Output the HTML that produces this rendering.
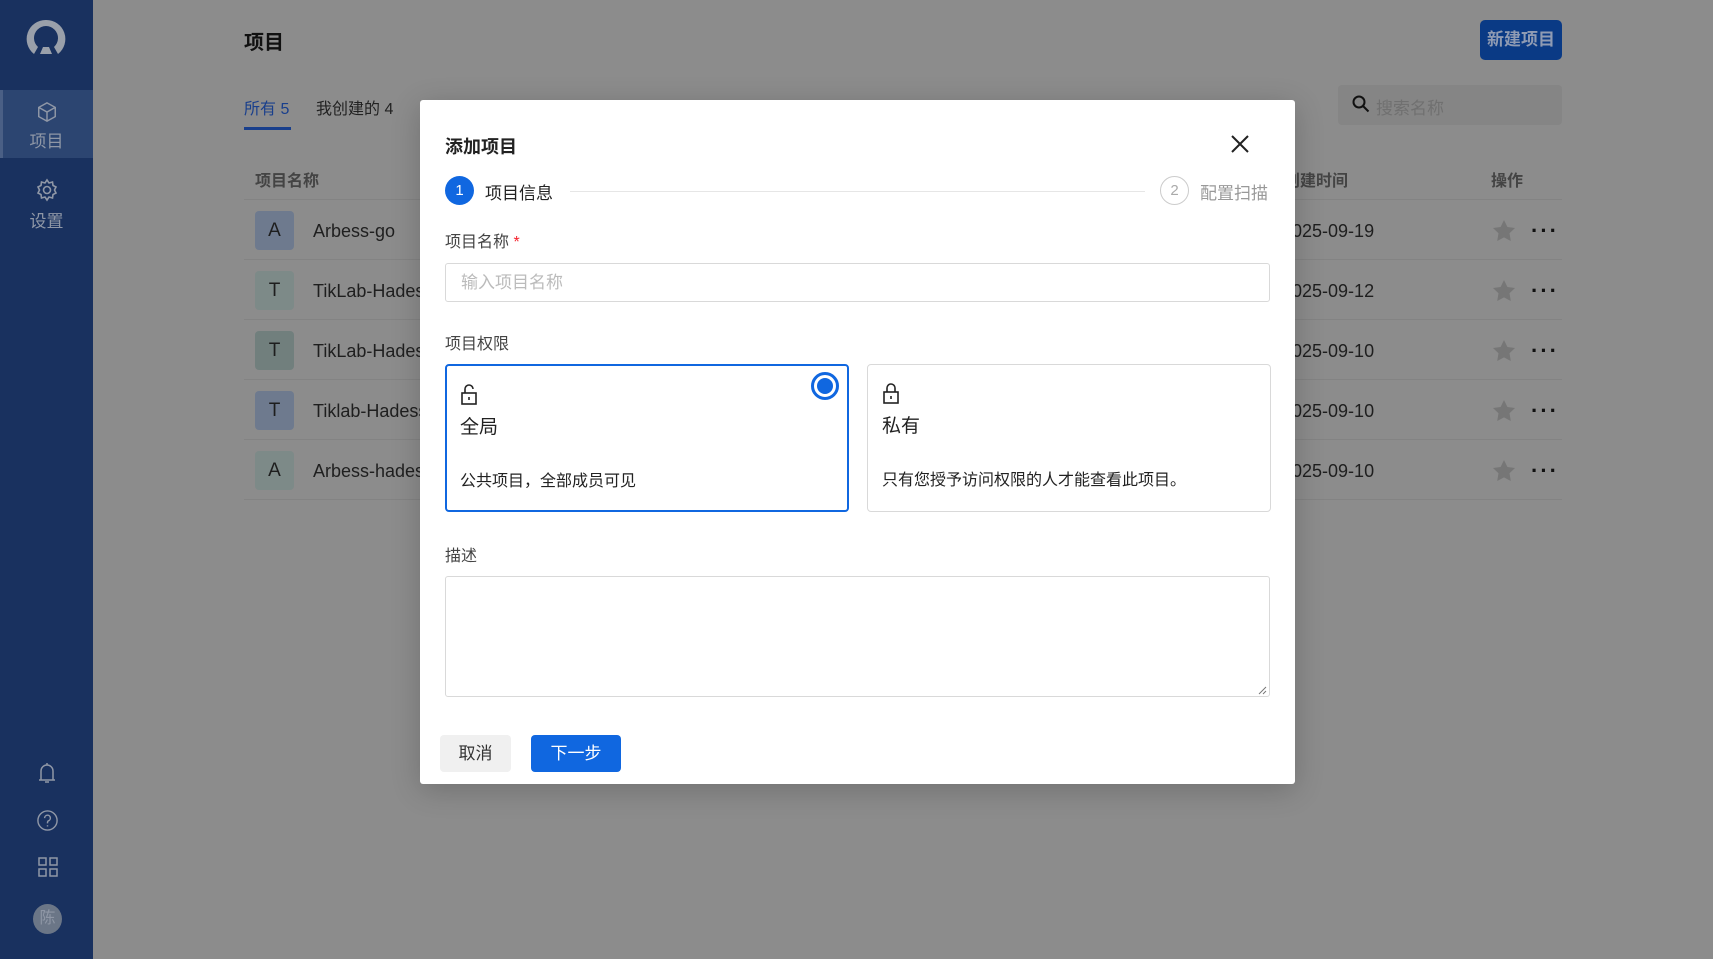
<!DOCTYPE html>
<html><head><meta charset="utf-8"><style>
*{margin:0;padding:0;box-sizing:border-box}
body{width:1713px;height:959px;overflow:hidden;background:#8c8c8c;font-family:"Liberation Sans","Noto Sans CJK SC",sans-serif;position:relative;color:#1a1a1a}
.a{position:absolute}
.sb{left:0;top:0;width:93px;height:959px;background:#19315f}
.row{left:244px;width:1318px;height:60px;border-bottom:1px solid #838383}
.av{left:11px;top:11px;width:39px;height:39px;border-radius:4px;font-size:19px;line-height:39px;text-align:center;color:#1e1e1e}
.nm{left:69px;top:1px;line-height:60px;font-size:18px;color:#1f1f1f}
.dt{left:1038px;top:1px;line-height:60px;font-size:18px;color:#1f1f1f}
.st{left:1248px;top:19px}
.dots{left:1287px;top:3px;line-height:56px;font-size:22px;letter-spacing:2px;color:#111;font-weight:bold}
.modal{left:420px;top:100px;width:875px;height:684px;background:#fff;border-radius:3px;box-shadow:0 6px 30px rgba(0,0,0,.2)}
.lbl{font-size:16px;color:#444}
.card{width:404px;height:148px;border:1px solid #d9d9d9;border-radius:4px}
</style></head><body>
<div class="a sb">
  <svg class="a" style="left:25px;top:18px" width="42" height="44" viewBox="0 0 42 44"><path d="M21 2a19 19 0 0 0-12 34l4-7a12 12 0 1 1 16 0l4 7A19 19 0 0 0 21 2z" fill="#9aa0aa"/><path d="M15 36l3-7h6l3 7z" fill="#9aa0aa"/></svg>
  <div class="a" style="left:0;top:90px;width:93px;height:68px;background:#2c4571;border-left:3px solid #4a5f85"></div>
  <svg class="a" style="left:36px;top:101px" width="22" height="22" viewBox="0 0 24 24" fill="none" stroke="#8f97a6" stroke-width="1.6"><path d="M12 2l9 5v10l-9 5-9-5V7z M3 7l9 5 9-5 M12 12v10"/></svg>
  <div class="a" style="left:0;top:127px;width:93px;text-align:center;font-size:17px;color:#8f97a6">项目</div>
  <svg class="a" style="left:35px;top:178px" width="24" height="24" viewBox="0 0 24 24" fill="none" stroke="#8f97a6" stroke-width="1.6"><circle cx="12" cy="12" r="3.5"/><path d="M12 2l2 3 3.5-1 .5 3.5 3 1.5-1.5 3 1.5 3-3 1.5-.5 3.5-3.5-1-2 3-2-3-3.5 1-.5-3.5-3-1.5 1.5-3-1.5-3 3-1.5.5-3.5 3.5 1z"/></svg>
  <div class="a" style="left:0;top:207px;width:93px;text-align:center;font-size:17px;color:#8f97a6">设置</div>
  <svg class="a" style="left:37px;top:761px" width="20" height="24" viewBox="0 0 20 24" fill="none" stroke="#8f97a6" stroke-width="1.5"><path d="M10 2v2M4 19V10a6 6 0 0 1 12 0v9M2 19h16M8 21h4"/></svg>
  <svg class="a" style="left:36px;top:809px" width="23" height="23" viewBox="0 0 24 24" fill="none" stroke="#8f97a6" stroke-width="1.5"><circle cx="12" cy="12" r="10"/><path d="M9 9.5a3 3 0 1 1 4 2.8c-.8.4-1 1-1 2v.7M12 17v1.2"/></svg>
  <svg class="a" style="left:38px;top:857px" width="20" height="20" viewBox="0 0 20 20" fill="none" stroke="#8f97a6" stroke-width="1.5"><rect x="1" y="1" width="7" height="7"/><rect x="12" y="1" width="7" height="7"/><rect x="1" y="12" width="7" height="7"/><rect x="12" y="12" width="7" height="7"/></svg>
  <div class="a" style="left:33px;top:904px;width:29px;height:30px;border-radius:50%;background:#6b7687;color:#8f97a6;font-size:16px;line-height:30px;text-align:center">陈</div>
</div>
<div class="a" style="left:244px;top:26px;font-size:20px;font-weight:bold;color:#111">项目</div>
<div class="a" style="left:1480px;top:20px;width:82px;height:40px;border-radius:5px;background:#0a3a85;color:#8f9bb3;font-size:17px;line-height:40px;text-align:center;font-weight:bold">新建项目</div>
<div class="a" style="left:244px;top:95px;font-size:16px;color:#193f8c">所有 5</div>
<div class="a" style="left:244px;top:127px;width:47px;height:3px;background:#193f8c"></div>
<div class="a" style="left:316px;top:95px;font-size:16px;color:#222">我创建的 4</div>
<div class="a" style="left:422px;top:95px;font-size:16px;color:#222">我收藏的</div>
<div class="a" style="left:1338px;top:85px;width:224px;height:40px;border-radius:4px;background:#858585"></div>
<svg class="a" style="left:1352px;top:95px" width="18" height="18" viewBox="0 0 18 18" fill="none" stroke="#111" stroke-width="2"><circle cx="7" cy="7" r="5.5"/><path d="M11 11l5.5 5.5"/></svg>
<div class="a" style="left:1376px;top:94px;font-size:17px;color:#707070">搜索名称</div>
<div class="a" style="left:244px;top:160px;width:1318px;height:40px;border-bottom:1px solid #838383"></div>
<div class="a" style="left:255px;top:167px;font-size:16px;font-weight:bold;color:#444">项目名称</div>
<div class="a" style="left:1284px;top:167px;font-size:16px;font-weight:bold;color:#444">创建时间</div>
<div class="a" style="left:1491px;top:167px;font-size:16px;font-weight:bold;color:#444">操作</div>

<div class="a row" style="top:200px"><div class="a av" style="background:#6e7a8e">A</div><div class="a nm">Arbess-go</div><div class="a dt">2025-09-19</div><svg class="a st" width="24" height="24" viewBox="0 0 24 24"><path d="M12 1l3.4 7 7.6 1-5.5 5.3 1.3 7.7L12 18.4 5.2 22l1.3-7.7L1 9l7.6-1z" fill="#767676"/></svg><div class="a dots">···</div></div>
<div class="a row" style="top:260px"><div class="a av" style="background:#7d8a88">T</div><div class="a nm">TikLab-Hadess</div><div class="a dt">2025-09-12</div><svg class="a st" width="24" height="24" viewBox="0 0 24 24"><path d="M12 1l3.4 7 7.6 1-5.5 5.3 1.3 7.7L12 18.4 5.2 22l1.3-7.7L1 9l7.6-1z" fill="#767676"/></svg><div class="a dots">···</div></div>
<div class="a row" style="top:320px"><div class="a av" style="background:#717f7d">T</div><div class="a nm">TikLab-Hadess</div><div class="a dt">2025-09-10</div><svg class="a st" width="24" height="24" viewBox="0 0 24 24"><path d="M12 1l3.4 7 7.6 1-5.5 5.3 1.3 7.7L12 18.4 5.2 22l1.3-7.7L1 9l7.6-1z" fill="#767676"/></svg><div class="a dots">···</div></div>
<div class="a row" style="top:380px"><div class="a av" style="background:#6e7a8e">T</div><div class="a nm">Tiklab-Hadess</div><div class="a dt">2025-09-10</div><svg class="a st" width="24" height="24" viewBox="0 0 24 24"><path d="M12 1l3.4 7 7.6 1-5.5 5.3 1.3 7.7L12 18.4 5.2 22l1.3-7.7L1 9l7.6-1z" fill="#767676"/></svg><div class="a dots">···</div></div>
<div class="a row" style="top:440px"><div class="a av" style="background:#7d8a88">A</div><div class="a nm">Arbess-hadess</div><div class="a dt">2025-09-10</div><svg class="a st" width="24" height="24" viewBox="0 0 24 24"><path d="M12 1l3.4 7 7.6 1-5.5 5.3 1.3 7.7L12 18.4 5.2 22l1.3-7.7L1 9l7.6-1z" fill="#767676"/></svg><div class="a dots">···</div></div>

<div class="a modal">
  <div class="a" style="left:25px;top:33px;font-size:18px;font-weight:bold;color:#222">添加项目</div>
  <svg class="a" style="left:811px;top:35px" width="18" height="18" viewBox="0 0 18 18" stroke="#222" stroke-width="2"><path d="M1 1l16 16M17 1L1 17"/></svg>
  <div class="a" style="left:25px;top:76px;width:29px;height:29px;border-radius:50%;background:#1067e0;color:#fff;font-size:15px;line-height:29px;text-align:center">1</div>
  <div class="a" style="left:65px;top:79px;font-size:17px;color:#222">项目信息</div>
  <div class="a" style="left:150px;top:91px;width:575px;height:1px;background:#e6e6e6"></div>
  <div class="a" style="left:740px;top:76px;width:29px;height:29px;border-radius:50%;border:1px solid #ccc;color:#aaa;font-size:15px;line-height:27px;text-align:center">2</div>
  <div class="a" style="left:780px;top:79px;font-size:17px;color:#999">配置扫描</div>
  <div class="a lbl" style="left:25px;top:128px">项目名称 <span style="color:#f5222d">*</span></div>
  <div class="a" style="left:25px;top:163px;width:825px;height:39px;border:1px solid #d9d9d9;border-radius:3px;padding-left:15px;line-height:37px;font-size:17px;color:#bbb">输入项目名称</div>
  <div class="a lbl" style="left:25px;top:230px">项目权限</div>
  <div class="a card" style="left:25px;top:264px;border:2px solid #1067e0"></div>
  <svg class="a" style="left:40px;top:284px" width="18" height="21" viewBox="0 0 18 21" fill="none" stroke="#222" stroke-width="1.6"><rect x="2" y="9" width="14" height="11"/><path d="M5 9V5a4 4 0 0 1 8 0M9 13v3"/></svg>
  <div class="a" style="left:40px;top:312px;font-size:19px;color:#222">全局</div>
  <div class="a" style="left:40px;top:367px;font-size:16px;color:#222">公共项目，全部成员可见</div>
  <div class="a" style="left:391px;top:272px;width:28px;height:28px;border-radius:50%;border:3px solid #1067e0;padding:3px"><div style="width:16px;height:16px;border-radius:50%;background:#1067e0"></div></div>
  <div class="a card" style="left:447px;top:264px"></div>
  <svg class="a" style="left:462px;top:283px" width="18" height="21" viewBox="0 0 18 21" fill="none" stroke="#222" stroke-width="1.6"><rect x="2" y="9" width="14" height="11"/><path d="M5 9V5a4 4 0 0 1 8 0v4M9 13v3"/></svg>
  <div class="a" style="left:462px;top:311px;font-size:19px;color:#222">私有</div>
  <div class="a" style="left:462px;top:366px;font-size:16px;color:#222">只有您授予访问权限的人才能查看此项目。</div>
  <div class="a lbl" style="left:25px;top:442px">描述</div>
  <div class="a" style="left:25px;top:476px;width:825px;height:121px;border:1px solid #d9d9d9;border-radius:3px"></div>
  <svg class="a" style="left:838px;top:586px" width="9" height="9" viewBox="0 0 9 9" stroke="#777" stroke-width="1"><path d="M1 8L8 1M5 8L8 5"/></svg>
  <div class="a" style="left:20px;top:635px;width:71px;height:37px;border-radius:4px;background:#f0f0f0;font-size:17px;line-height:37px;text-align:center;color:#333">取消</div>
  <div class="a" style="left:111px;top:635px;width:90px;height:37px;border-radius:4px;background:#1067e0;font-size:17px;line-height:37px;text-align:center;color:#fff">下一步</div>
</div>
</body></html>
